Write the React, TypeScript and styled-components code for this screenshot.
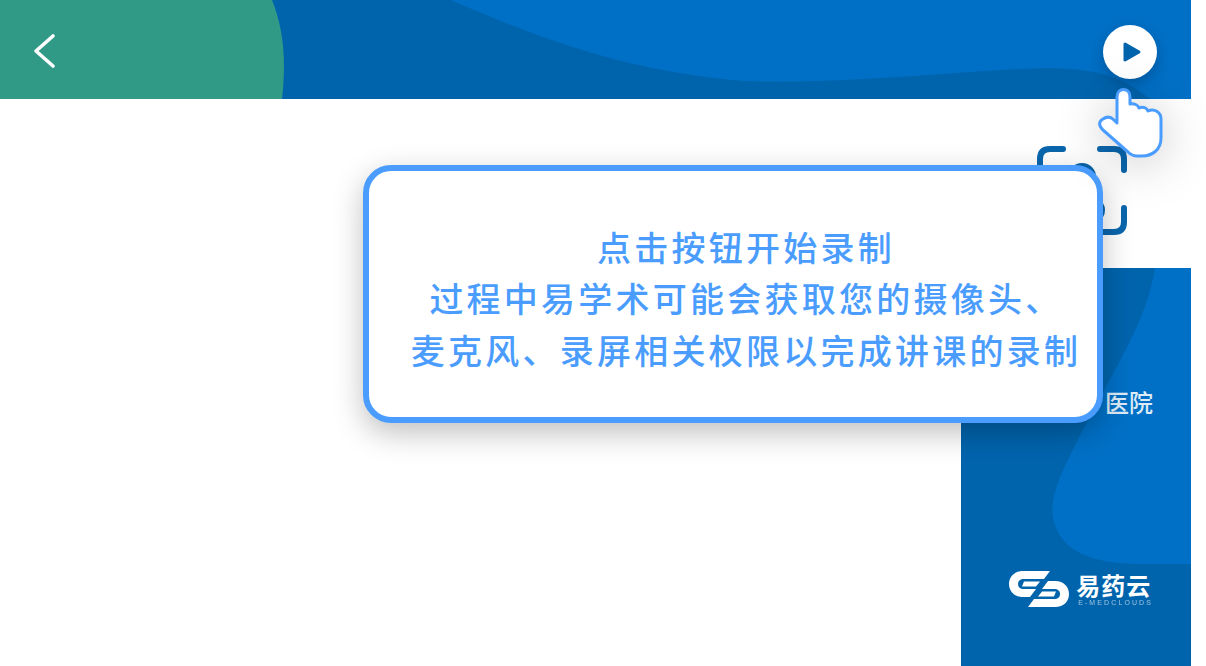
import { createGlobalStyle, styled } from "styled-components";

const GlobalStyle = createGlobalStyle`
  html, body {
    margin: 0;
    padding: 0;
    height: 100%;
    background: #fff;
    overflow: hidden;
    font-family: "Noto Sans CJK SC", "Noto Sans", sans-serif;
  }
`;

const Page = styled.div`
  position: relative;
  width: 1191px;
  height: 666px;
  display: flex;
  flex-direction: column;
  background: #fff;
`;

const Header = styled.header`
  position: relative;
  height: 99px;
  flex: none;
  display: flex;
  align-items: center;
  justify-content: space-between;
  padding: 0 34px 0 33px;
  box-sizing: border-box;
  background: #0064ad;
  overflow: hidden;
`;

const Backdrop = styled.svg`
  position: absolute;
  inset: 0;
  width: 100%;
  height: 100%;
`;

const BackIcon = styled.svg`
  position: relative;
  width: 24px;
  height: 36px;
  margin-top: 3px;
`;

const PlayButton = styled.button`
  position: relative;
  width: 54px;
  height: 54px;
  margin-top: 5px;
  padding: 0 0 0 4px;
  border: none;
  border-radius: 50%;
  background: #fff;
  box-shadow: 0 5px 14px rgba(0, 40, 80, 0.35);
  display: flex;
  align-items: center;
  justify-content: center;
`;

const Body = styled.main`
  flex: 1;
  display: flex;
  flex-direction: column;
  align-items: flex-end;
`;

const ScanArea = styled.div`
  width: 230px;
  height: 169px;
  padding: 47px 0 0 76px;
  box-sizing: border-box;
`;

const ScanIcon = styled.svg`
  display: block;
  width: 90px;
  height: 90px;
`;

const Panel = styled.section`
  position: relative;
  flex: 1;
  width: 230px;
  display: flex;
  flex-direction: column;
  align-items: flex-end;
  padding: 117px 38px 0 0;
  box-sizing: border-box;
  background: #0064ad;
  overflow: hidden;
`;

const PanelBlob = styled.svg`
  position: absolute;
  inset: 0;
  width: 100%;
  height: 100%;
`;

const Hospital = styled.div`
  position: relative;
  font-size: 24px;
  line-height: 34px;
  font-weight: 500;
  color: #dcebf7;
`;

const Logo = styled.div`
  position: relative;
  display: flex;
  align-items: flex-start;
  gap: 7px;
  margin-top: 152px;
`;

const LogoMark = styled.svg`
  width: 60px;
  height: 36px;
`;

const LogoWords = styled.div`
  display: flex;
  flex-direction: column;
  align-items: flex-start;
  color: #fff;
`;

const LogoName = styled.div`
  font-size: 24px;
  line-height: 28px;
  font-weight: 700;
  letter-spacing: 1px;
`;

const LogoLatin = styled.div`
  margin-left: 2px;
  font-family: "Liberation Sans", sans-serif;
  font-size: 7px;
  line-height: 8px;
  letter-spacing: 2.1px;
  opacity: 0.6;
`;

const Tooltip = styled.div`
  position: absolute;
  left: 363px;
  top: 165px;
  width: 740px;
  height: 258px;
  box-sizing: border-box;
  border: 6px solid #4a9dff;
  border-radius: 28px;
  padding: 8px 0 0 26px;
  background: #fff;
  box-shadow: 0 10px 30px rgba(0, 0, 0, 0.25);
  display: flex;
  flex-direction: column;
  align-items: center;
  justify-content: center;
`;

const TipLine = styled.div`
  font-size: 34px;
  font-weight: 500;
  line-height: 51.5px;
  letter-spacing: 3.25px;
  color: #4a9dff;
  white-space: nowrap;
`;

const Hand = styled.svg`
  position: absolute;
  left: 1085px;
  top: 80px;
  width: 90px;
  height: 85px;
  overflow: visible;
  filter: drop-shadow(0 6px 24px rgba(0, 0, 0, 0.22));
`;

const linkPath =
  "M41 0 H14 C5 0 0 6 0 13 C0 20 5 26 14 26 H21 L27 18 H15 C11 18 9 16 9 13 C9 10 11 8 15 8 H35 Z";
const chipPath = "M15 10.5 H31 L27 15.5 H13 Z";

function App() {
  return (
    <Page>
      <GlobalStyle />
      <Header>
        <Backdrop viewBox="0 0 1191 99" preserveAspectRatio="none">
          <path
            d="M451 0 C520 30 620 72 745 81 C830 84 930 74 1017 69 C1080 66 1115 70 1150 99 L1191 99 L1191 0 Z"
            fill="#0070c6"
          />
          <path d="M0 0 H272 C282 25 287 55 282 99 H0 Z" fill="#309a87" />
        </Backdrop>
        <BackIcon viewBox="0 0 24 36" fill="none">
          <path
            d="M20 3 L3 18 L20 33"
            stroke="#fff"
            strokeWidth="3.6"
            strokeLinecap="round"
            strokeLinejoin="round"
          />
        </BackIcon>
        <PlayButton aria-label="play">
          <svg width="20" height="22" viewBox="0 0 20 22">
            <path
              d="M3 3 L17 11 L3 19 Z"
              fill="#0064ad"
              stroke="#0064ad"
              strokeWidth="3"
              strokeLinejoin="round"
            />
          </svg>
        </PlayButton>
      </Header>

      <Body>
        <ScanArea>
          <ScanIcon viewBox="0 0 90 90" fill="none" stroke="#0a66ad" strokeWidth="6" strokeLinecap="round">
            <path d="M3 23 V13 Q3 3 13 3 H26" />
            <path d="M63 3 H77 Q87 3 87 13 V24" />
            <path d="M87 62 V76 Q87 86 77 86 H60" />
            <circle cx="45" cy="31" r="11" />
            <ellipse cx="45" cy="64" rx="20" ry="14" />
          </ScanIcon>
        </ScanArea>
        <Panel>
          <PanelBlob viewBox="0 0 230 398" preserveAspectRatio="none">
            <path
              d="M194 0 C186 50 160 90 128 150 C105 195 88 225 92 250 C98 280 125 296 180 296 L230 296 L230 0 Z"
              fill="#0070c6"
            />
          </PanelBlob>
          <Hospital>医院</Hospital>
          <Logo>
            <LogoMark viewBox="0 0 60 36" fill="#fff">
              <path d={linkPath} />
              <path d={linkPath} transform="rotate(180 30 18)" />
              <path d={chipPath} />
              <path d={chipPath} transform="rotate(180 30 18)" />
            </LogoMark>
            <LogoWords>
              <LogoName>易药云</LogoName>
              <LogoLatin>E-MEDCLOUDS</LogoLatin>
            </LogoWords>
          </Logo>
        </Panel>
      </Body>

      <Tooltip>
        <TipLine>点击按钮开始录制</TipLine>
        <TipLine>过程中易学术可能会获取您的摄像头、</TipLine>
        <TipLine>麦克风、录屏相关权限以完成讲课的录制</TipLine>
      </Tooltip>

      <Hand viewBox="0 0 90 85">
        <path
          d="M32 17 C32 7 45 7 45 17 V24 C49 23 53 25 54 28 C58 26 62 28 63 31 C69 28 76 32 76 39 V58 C76 70 67 76 57 76 H52 C48 76 46 75 43 72 L18 50 C13 45 14 41 18 39 C22 36 26 37 29 40 L32 43 Z"
          fill="#fff"
          stroke="#4a9dff"
          strokeWidth="3"
          strokeLinejoin="round"
        />
      </Hand>
    </Page>
  );
}

export default App;
